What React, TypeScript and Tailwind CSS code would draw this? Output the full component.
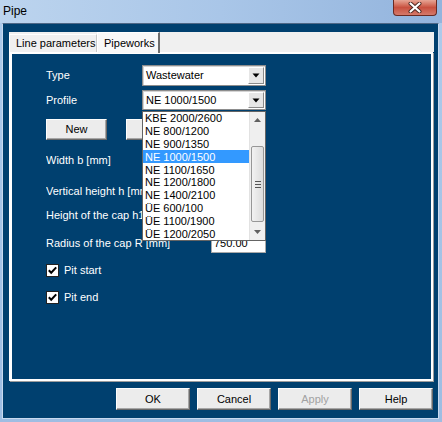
import type { ReactNode } from "react";

const profiles = [
  "KBE 2000/2600",
  "NE 800/1200",
  "NE 900/1350",
  "NE 1000/1500",
  "NE 1100/1650",
  "NE 1200/1800",
  "NE 1400/2100",
  "ÜE 600/100",
  "ÜE 1100/1900",
  "ÜE 1200/2050",
];

const DownTriangle = () => (
  <svg width="8" height="5" viewBox="0 0 8 5">
    <path d="M0.5 0.5 L7.5 0.5 L4 4.5 Z" fill="#000" />
  </svg>
);

const Combo = ({ value, height }: { value: string; height: string }) => (
  <div className={`w-[124px] ${height} flex items-stretch bg-white border border-[#8d8d8d] shadow-[inset_1px_1px_0_#d4d4d4]`}>
    <span className="flex-1 pl-[3px] flex items-center text-black">{value}</span>
    <div className="w-[16px] m-[1px] flex items-center justify-center bg-[#e6e6e6] border border-t-white border-l-white border-r-[#8a8a8a] border-b-[#8a8a8a]">
      <DownTriangle />
    </div>
  </div>
);

const WinButton = ({ children, disabled, width = "w-[74px]", height = "h-[22px]" }: { children?: ReactNode; disabled?: boolean; width?: string; height?: string }) => (
  <div
    className={`${width} ${height} flex items-center justify-center bg-[#ececec] border border-t-[#fdfdfd] border-l-[#fdfdfd] border-r-[#696969] border-b-[#696969] shadow-[inset_-1px_-1px_0_#a6a6a6] ${
      disabled ? "text-[#a2a2a2]" : "text-black"
    }`}
  >
    {children}
  </div>
);

const CheckBox = () => (
  <svg width="13" height="13" viewBox="0 0 13 13">
    <rect x="0.5" y="0.5" width="12" height="12" fill="#fff" stroke="#222" />
    <path d="M2.8 6.3 L5.2 8.8 L10.2 3.4" fill="none" stroke="#000" strokeWidth="2" />
  </svg>
);

// Labels that sit under the open dropdown are cut where the list begins
const Row = ({ label, mt, clipped, children }: { label: string; mt: string; clipped?: boolean; children?: ReactNode }) => (
  <div className={`${mt} h-[20px] flex items-center`}>
    {clipped ? (
      <>
        <span className="w-[96px] text-white whitespace-nowrap overflow-hidden">{label}</span>
        <span className="w-[69px]" />
      </>
    ) : (
      <span className="w-[165px] text-white whitespace-nowrap">{label}</span>
    )}
    {children}
  </div>
);

const Field = ({ value = "" }: { value?: string }) => (
  <div className="w-[55px] h-[19px] flex items-center bg-white border border-[#a9a9a9] pl-[2px] text-black">{value}</div>
);

const App = () => {
  return (
    <div className="relative w-[442px] h-[422px] overflow-hidden flex flex-col bg-gradient-to-b from-[#aecbeb] to-[#9ebde2] font-['Liberation_Sans',Arial,sans-serif] text-[11px] leading-[13px]">
      {/* Title bar */}
      <div className="h-[23px] shrink-0 flex items-start justify-between bg-gradient-to-r from-[#bcd4ee] via-[#a9c6e8] to-[#93b4dd]">
        <span className="pl-[3px] pt-[4px] text-[12px] leading-[15px] text-black">Pipe</span>
        <div className="mr-[5px] w-[44px] h-[16px] flex items-center justify-center rounded-b-[4px] border border-t-0 border-[#6a2a22] bg-gradient-to-b from-[#e6a595] via-[#c8503f] to-[#d4796a]">
          <svg width="14" height="11" viewBox="0 0 14 11">
            <path d="M2.5 1.5 L11.5 9.5 M11.5 1.5 L2.5 9.5" stroke="#4a2620" strokeWidth="4" strokeLinecap="round" />
            <path d="M2.5 1.5 L11.5 9.5 M11.5 1.5 L2.5 9.5" stroke="#fff" strokeWidth="2.2" strokeLinecap="round" />
          </svg>
        </div>
      </div>

      {/* Client area */}
      <div className="flex-1 ml-[2px] mr-[3px] mb-[3px] border border-t-[#4e6786] border-l-[#c9daef] border-r-[#c9daef] border-b-[#c9daef] bg-[#00406f] flex flex-col pl-[6px] pr-[4px] pt-[8px]">
        {/* Tab header */}
        <div className="h-[20px] shrink-0 flex items-end bg-[#f0f0f0]">
          <div className="w-[88px] h-[18px] flex items-center pl-[6px] whitespace-nowrap bg-[#f0f0f0] border-l border-t border-white border-r border-r-[#c8c8c8] text-black">
            Line parameters
          </div>
          <div className="relative z-[1] w-[63px] h-[21px] -mb-[1px] flex items-start pt-[4px] pl-[6px] whitespace-nowrap bg-[#f8f8f8] border-t border-l border-white border-r-2 border-r-[#6e6e6e] text-black">
            Pipeworks
          </div>
        </div>

        {/* Tab panel */}
        <div className="h-[329px] shrink-0 mr-[1px] border-l-[3px] border-t-2 border-r-2 border-b-2 border-white shadow-[1px_1px_0_#9c9c9c] flex flex-col pl-[34px]">
          <div className="mt-[11px] h-[21px] flex items-center">
            <span className="w-[96px] text-white">Type</span>
            <Combo value="Wastewater" height="h-[21px]" />
          </div>
          <div className="mt-[4px] h-[20px] flex items-center">
            <span className="w-[96px] text-white">Profile</span>
            <Combo value="NE 1000/1500" height="h-[20px]" />
          </div>
          <div className="mt-[9px] flex gap-[19px]">
            <WinButton width="w-[61px]" height="h-[21px]">New</WinButton>
            <WinButton width="w-[61px]" height="h-[21px]" />
          </div>
          <Row label="Width b [mm]" mt="mt-[10px]" clipped>
            <Field />
          </Row>
          <Row label="Vertical height h [mm]" mt="mt-[11px]" clipped>
            <Field />
          </Row>
          <Row label="Height of the cap h1 [mm]" mt="mt-[4px]" clipped>
            <Field />
          </Row>
          <Row label="Radius of the cap R [mm]" mt="mt-[8px]">
            <Field value="750.00" />
          </Row>
          <div className="mt-[7px] h-[20px] flex items-center gap-[5px] text-white">
            <CheckBox />
            <span>Pit start</span>
          </div>
          <div className="mt-[7px] h-[20px] flex items-center gap-[5px] text-white">
            <CheckBox />
            <span>Pit end</span>
          </div>
        </div>

        {/* Dialog buttons */}
        <div className="mt-[7px] mr-[1px] flex justify-end gap-[7px]">
          <WinButton>OK</WinButton>
          <WinButton>Cancel</WinButton>
          <WinButton disabled>Apply</WinButton>
          <WinButton>Help</WinButton>
        </div>
      </div>

      {/* Open profile dropdown */}
      <div className="absolute left-[142px] top-[111px] z-10 w-[124px] h-[130px] flex bg-white border border-[#646464]">
        <div className="flex-1 flex flex-col">
          {profiles.map((p) => (
            <div
              key={p}
              className={`h-[12.8px] leading-[12px] pl-[2px] flex items-center whitespace-nowrap ${
                p === "NE 1000/1500" ? "bg-[#3399ff] text-white" : "text-black"
              }`}
            >
              {p}
            </div>
          ))}
        </div>
        <div className="w-[16px] flex flex-col bg-[#efefef] border-l border-[#e2e2e2]">
          <div className="h-[16px] flex items-center justify-center">
            <svg width="7" height="4" viewBox="0 0 7 4">
              <path d="M0 4 L3.5 0 L7 4 Z" fill="#606060" />
            </svg>
          </div>
          <div className="flex-1 flex flex-col">
            <div className="h-[18px]" />
            <div className="h-[76px] mx-[1px] flex flex-col items-center justify-center gap-[2px] rounded-[2px] border border-[#979797] bg-gradient-to-r from-[#f2f2f2] to-[#dcdcdc]">
              <div className="w-[6px] h-px bg-[#555]" />
              <div className="w-[6px] h-px bg-[#555]" />
              <div className="w-[6px] h-px bg-[#555]" />
            </div>
          </div>
          <div className="h-[16px] flex items-center justify-center">
            <svg width="7" height="4" viewBox="0 0 7 4">
              <path d="M0 0 L7 0 L3.5 4 Z" fill="#606060" />
            </svg>
          </div>
        </div>
      </div>
    </div>
  );
};

export default App;
